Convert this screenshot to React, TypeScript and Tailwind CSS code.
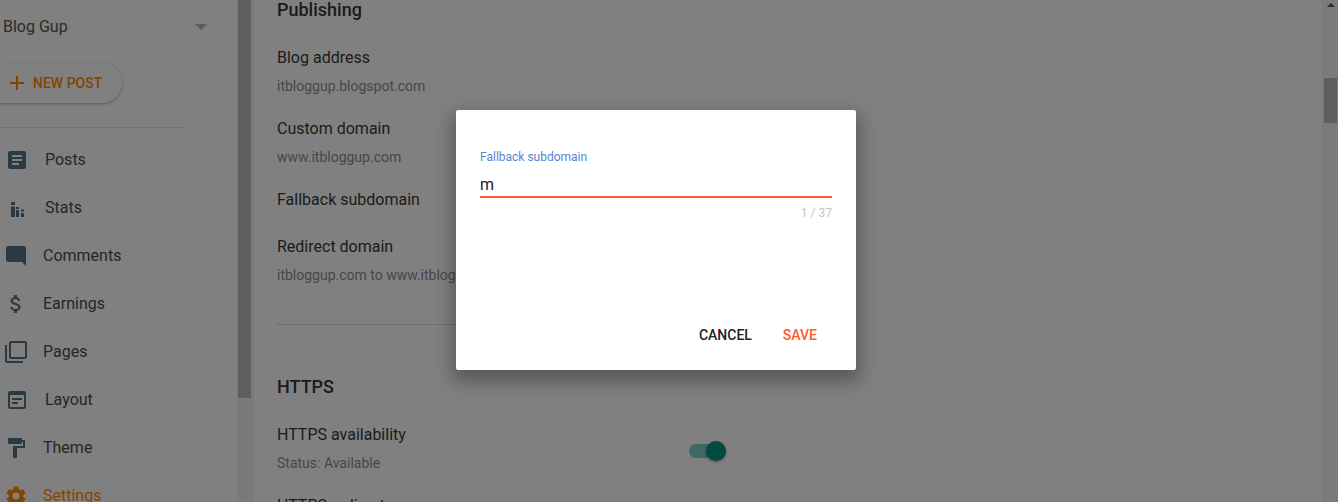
const navItems = [
  { label: "Posts", box: "pl-[5px]", gap: "ml-4", d: "M19 3H5c-1.1 0-2 .9-2 2v14c0 1.1.9 2 2 2h14c1.1 0 2-.9 2-2V5c0-1.1-.9-2-2-2zm-5 14H7v-2h7v2zm3-4H7v-2h10v2zm0-4H7V7h10v2z" },
  { label: "Stats", box: "pl-[5px]", gap: "ml-4", d: "M6 6h4v3H6zM6 10.500h4V21H6zM11 11h3v2h-3zM11 14h3v7h-3zM16 13.500h3v2h-3zM16 17h3v4h-3z" },
  { label: "Comments", box: "pl-1", gap: "ml-[15px]", d: "M21.99 4c0-1.1-.89-2-1.99-2H4c-1.1 0-2 .9-2 2v12c0 1.1.9 2 2 2h14l4 4-.01-18z" },
  { label: "Earnings", box: "pl-1", gap: "ml-[15px]", d: "M11.8 10.9c-2.27-.59-3-1.2-3-2.15 0-1.09 1.01-1.85 2.7-1.85 1.78 0 2.44.85 2.5 2.1h2.21c-.07-1.72-1.12-3.3-3.21-3.81V3h-3v2.16c-1.94.42-3.5 1.68-3.5 3.61 0 2.31 1.91 3.46 4.7 4.13 2.5.6 3 1.48 3 2.41 0 .69-.49 1.79-2.7 1.79-2.06 0-2.87-.92-2.98-2.1h-2.2c.12 2.19 1.76 3.42 3.68 3.83V21h3v-2.15c1.95-.37 3.5-1.5 3.5-3.55 0-2.84-2.43-3.81-4.7-4.4z" },
  { label: "Pages", box: "pl-1", gap: "ml-[15px]", d: "M3 5H1v16c0 1.1.9 2 2 2h16v-2H3V5zm18-4H7c-1.1 0-2 .9-2 2v14c0 1.1.9 2 2 2h14c1.1 0 2-.9 2-2V3c0-1.1-.9-2-2-2zm0 16H7V3h14v14z" },
  { label: "Layout", box: "pl-[5px]", gap: "ml-4", d: "M19 3H5c-1.1 0-2 .9-2 2v14c0 1.1.9 2 2 2h14c1.1 0 2-.9 2-2V5c0-1.1-.9-2-2-2zm0 16H5V7h14v12zM7 10h10v2H7zM7 14h6v2H7z" },
  { label: "Theme", box: "pl-1", gap: "ml-[15px]", d: "M18 4V3c0-.55-.45-1-1-1H5c-.55 0-1 .45-1 1v4c0 .55.45 1 1 1h12c.55 0 1-.45 1-1V6h1v4H9v11c0 .55.45 1 1 1h2c.55 0 1-.45 1-1v-9h8V4h-3z" },
  { label: "Settings", box: "pl-1", gap: "ml-[15px]", active: true, d: "M19.14 12.94c.04-.3.06-.61.06-.94 0-.32-.02-.64-.07-.94l2.03-1.58c.18-.14.23-.41.12-.61l-1.92-3.32c-.12-.22-.37-.29-.59-.22l-2.39.96c-.5-.38-1.03-.7-1.62-.94l-.36-2.54c-.04-.24-.24-.41-.48-.41h-3.84c-.24 0-.43.17-.47.41l-.36 2.54c-.59.24-1.13.57-1.62.94l-2.39-.96c-.22-.08-.47 0-.59.22L2.74 8.87c-.12.21-.08.47.12.61l2.03 1.58c-.05.3-.09.63-.09.94s.02.64.07.94l-2.03 1.58c-.18.14-.23.41-.12.61l1.92 3.32c.12.22.37.29.59.22l2.39-.96c.5.38 1.03.7 1.62.94l.36 2.54c.05.24.24.41.48.41h3.84c.24 0 .44-.17.47-.41l.36-2.54c.59-.24 1.13-.56 1.62-.94l2.39.96c.22.08.47 0 .59-.22l1.92-3.32c.12-.22.07-.47-.12-.61l-2.01-1.58zM12 15.6c-1.98 0-3.6-1.62-3.6-3.6s1.62-3.6 3.6-3.6 3.6 1.62 3.6 3.6-1.62 3.6-3.6 3.6z" },
];

function Setting({ title, sub, className }: { title: string; sub?: string; className?: string }) {
  return (
    <div className={className}>
      <div className="text-base leading-6 text-[#1a1a1a]">{title}</div>
      {sub && <div className="mt-[4px] text-sm leading-6 text-[#474747]">{sub}</div>}
    </div>
  );
}

export default function App() {
  return (
    <div className="relative flex h-[502px] w-[1338px] overflow-hidden bg-[#808080] font-['Roboto',sans-serif]">
      {/* sidebar */}
      <aside className="w-[237px] shrink-0">
        <div className="flex h-[54px] items-center justify-between pl-[3px] pr-[30px] text-base text-[#2b2b2b]">
          <span>Blog Gup</span>
          <span className="h-0 w-0 border-x-[6px] border-t-[6px] border-x-transparent border-t-[#5c5c5c]" />
        </div>
        <button className="mt-[9px] flex h-10 w-[122px] items-center rounded-r-full bg-[#808080] pl-[9px] shadow-[0_1px_3px_rgba(0,0,0,0.3)]">
          <svg viewBox="0 0 16 16" className="h-4 w-4 fill-[#844400]">
            <path d="M7 1h2v6h6v2H9v6H7V9H1V7h6z" />
          </svg>
          <span className="ml-2 text-sm font-medium text-[#844400]">NEW POST</span>
        </button>
        <div className="mt-6 h-px w-[183px] bg-[#737373]" />
        <nav className="mt-[8px]">
          {navItems.map((item) => (
            <div key={item.label} className={`flex h-12 items-center ${item.box}`}>
              <svg viewBox="0 0 24 24" className={`h-6 w-6 shrink-0 ${item.active ? "fill-[#844400]" : "fill-[#2b3a42]"}`}>
                <path d={item.d} />
              </svg>
              <span className={`${item.gap} text-base ${item.active ? "text-[#844400]" : "text-[#262626]"}`}>{item.label}</span>
            </div>
          ))}
        </nav>
      </aside>

      {/* sidebar scrollbar */}
      <div className="w-[17px] shrink-0 bg-[#7a7a7a] pl-px">
        <div className="h-[398px] w-[13px] bg-[#5e5e5e]" />
      </div>

      {/* main */}
      <main className="flex-1 pl-[23px]">
        <h2 className="-mt-[2px] text-lg font-medium leading-6 text-[#1a1a1a]">Publishing</h2>
        <Setting title="Blog address" sub="itbloggup.blogspot.com" className="mt-[24px]" />
        <Setting title="Custom domain" sub="www.itbloggup.com" className="mt-[19px]" />
        <Setting title="Fallback subdomain" className="mt-[19px]" />
        <Setting title="Redirect domain" sub="itbloggup.com to www.itbloggup.com" className="mt-[23px]" />
        <div className="mt-[37px] h-px w-[520px] bg-[#6e6e6e]" />
        <h2 className="mt-[50px] text-lg font-medium leading-6 text-[#1a1a1a]">HTTPS</h2>
        <div className="mt-[24px] flex w-[446px] justify-between">
          <Setting title="HTTPS availability" sub="Status: Available" />
          <div className="relative mt-[21px] h-[14px] w-[34px] rounded-full bg-[#3d6a62]">
            <span className="absolute -right-[3px] -top-[3px] h-5 w-5 rounded-full bg-[#004a40] shadow-[0_1px_3px_rgba(0,0,0,0.4)]" />
          </div>
        </div>
        <Setting title="HTTPS redirect" className="mt-[19px]" />
      </main>

      {/* page scrollbar */}
      <div className="relative w-4 shrink-0 bg-[#7b7b7b]">
        <span className="absolute left-[5px] top-[3px] h-0 w-0 border-x-[4px] border-b-[4px] border-x-transparent border-b-[#2a2a2a]" />
        <div className="absolute left-[2px] top-[78px] h-[45px] w-[13px] bg-[#5e5e5e]" />
      </div>

      {/* dialog */}
      <div className="absolute left-[456px] top-[110px] flex h-[260px] w-[400px] flex-col rounded-[2px] bg-white px-6 pt-10 shadow-[0_8px_17px_4px_rgba(0,0,0,0.3)]">
        <label className="text-xs leading-[14px] text-[#5a7fd4]">Fallback subdomain</label>
        <div className="mt-[11px] border-b-2 border-[#ff5a2b] pb-px text-base leading-5 text-[#212121]">m</div>
        <div className="mt-[8px] text-right text-xs leading-[14px] text-[#c4c4c4]">1 / 37</div>
        <div className="mt-auto mb-[26px] flex justify-end gap-[31px] pr-[15px] text-sm font-medium leading-[18px]">
          <button className="text-[#212121]">CANCEL</button>
          <button className="text-[#ff5a2b]">SAVE</button>
        </div>
      </div>
    </div>
  );
}
